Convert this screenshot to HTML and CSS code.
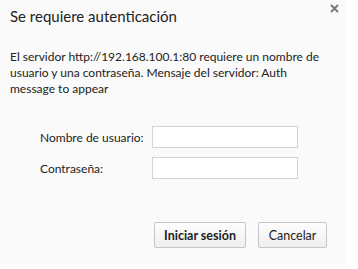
FILE: index.html
```html
<!DOCTYPE html>
<html lang="es">
<head>
  <meta charset="UTF-8">
  <meta name="viewport" content="width=device-width, initial-scale=1.0">
  <title>Se requiere autenticación</title>
  <link rel="stylesheet" href="styles.css">
</head>
<body>
  <div class="dialog">
    <div class="dialog-header">
      <h1 class="dialog-title">Se requiere autenticación</h1>
      <button class="close-btn" aria-label="Cerrar">
        <svg width="9" height="9" viewBox="0 0 9 9">
          <path d="M1 1 L8 8 M8 1 L1 8" stroke="#7a7a7a" stroke-width="2"/>
        </svg>
      </button>
    </div>

    <p class="message">El servidor http://192.168.100.1:80 requiere un nombre de usuario y una contraseña. Mensaje del servidor: Auth message to appear</p>

    <form class="login-form">
      <label for="username">Nombre de usuario:</label>
      <input type="text" id="username">
      <label for="password">Contraseña:</label>
      <input type="password" id="password">
    </form>

    <div class="actions">
      <button class="btn btn-primary">Iniciar sesión</button>
      <button class="btn">Cancelar</button>
    </div>
  </div>
</body>
</html>
```

FILE: styles.css
```css
body {
  margin: 0;
  background: #fff;
  font-family: Lato, sans-serif;
  font-size: 12px;
  color: #222;
}

.dialog {
  width: 346px;
  height: 264px;
  background: #fafafa;
  box-sizing: border-box;
  padding: 0 19px 0 10px;
  display: flex;
  flex-direction: column;
}

.dialog-header {
  display: flex;
  justify-content: space-between;
  align-items: flex-start;
  height: 40px;
}

.dialog-title {
  margin: 5px 0 0;
  font-size: 15px;
  font-weight: normal;
  line-height: 22px;
  color: #222;
}

.close-btn {
  margin: 4px -12px 0 0;
  padding: 0;
  width: 9px;
  height: 9px;
  border: none;
  background: none;
  display: flex;
}

.message {
  margin: 9px 0 0;
  width: 312px;
  line-height: 16px;
}

.login-form {
  margin-top: 29px;
  padding-left: 30px;
  display: grid;
  grid-template-columns: 112px 146px;
  row-gap: 9px;
  align-items: center;
}

.login-form label {
  white-space: nowrap;
}

.login-form input {
  box-sizing: border-box;
  width: 146px;
  height: 22px;
  margin: 0;
  border: 1px solid #d3d3d3;
  background: #fff;
}

.actions {
  margin-top: 43px;
  display: flex;
  justify-content: flex-end;
  gap: 12px;
}

.btn {
  height: 26px;
  padding: 0;
  font-family: inherit;
  font-size: 12.5px;
  color: #222;
  white-space: nowrap;
  border: 1px solid #c6c6c6;
  border-radius: 2px;
  background: linear-gradient(#fdfdfd, #efefef);
}

.btn-primary {
  width: 92px;
  font-weight: bold;
}

.btn:not(.btn-primary) {
  width: 69px;
}
```
